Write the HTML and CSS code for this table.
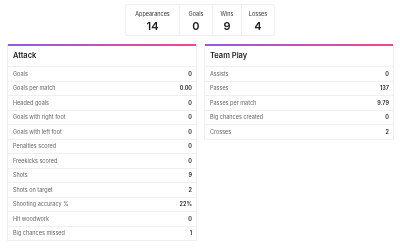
FILE: index.html
```html
<!DOCTYPE html>
<html>
<head>
<meta charset="utf-8">
<link rel="stylesheet" href="styles.css">
</head>
<body>
<div class="page">
  <div class="summary">
    <div class="cell c1"><span class="lbl">Appearances</span><span class="num">14</span></div>
    <div class="cell c2"><span class="lbl">Goals</span><span class="num">0</span></div>
    <div class="cell c3"><span class="lbl">Wins</span><span class="num">9</span></div>
    <div class="cell c4"><span class="lbl">Losses</span><span class="num">4</span></div>
  </div>
  <div class="panels">
    <div class="panel">
      <div class="title">Attack</div>
      <div class="row"><span>Goals</span><b>0</b></div>
      <div class="row"><span>Goals per match</span><b>0.00</b></div>
      <div class="row"><span>Headed goals</span><b>0</b></div>
      <div class="row"><span>Goals with right foot</span><b>0</b></div>
      <div class="row"><span>Goals with left foot</span><b>0</b></div>
      <div class="row"><span>Penalties scored</span><b>0</b></div>
      <div class="row"><span>Freekicks scored</span><b>0</b></div>
      <div class="row"><span>Shots</span><b>9</b></div>
      <div class="row"><span>Shots on target</span><b>2</b></div>
      <div class="row"><span>Shooting accuracy %</span><b>22%</b></div>
      <div class="row"><span>Hit woodwork</span><b>0</b></div>
      <div class="row"><span>Big chances missed</span><b>1</b></div>
    </div>
    <div class="panel">
      <div class="title">Team Play</div>
      <div class="row"><span>Assists</span><b>0</b></div>
      <div class="row"><span>Passes</span><b>137</b></div>
      <div class="row"><span>Passes per match</span><b>9.79</b></div>
      <div class="row"><span>Big chances created</span><b>0</b></div>
      <div class="row"><span>Crosses</span><b>2</b></div>
    </div>
  </div>
</div>
</body>
</html>
```
FILE: styles.css
```css
html, body {
  margin: 0;
  padding: 0;
  background: #ffffff;
}
body {
  font-family: Inter, "Noto Sans", sans-serif;
  color: #222;
  -webkit-font-smoothing: antialiased;
}
.page {
  width: 400px;
  height: 252px;
  padding-top: 4px;
  box-sizing: border-box;
  will-change: transform;
}
.summary {
  display: flex;
  width: 150px;
  height: 32px;
  margin: 0 auto;
  border: 1px solid #efefef;
  box-sizing: border-box;
  border-radius: 2px;
}
.cell {
  display: flex;
  flex-direction: column;
  align-items: center;
  border-left: 1px solid #efefef;
  padding-top: 5px;
  gap: 2px;
  box-sizing: border-box;
}
.cell.c1 { border-left: none; width: 53px; }
.cell.c2 { width: 33px; }
.cell.c3 { width: 29px; }
.cell.c4 { width: 33px; }
.lbl {
  font-size: 5.5px;
  line-height: 8px;
  color: #333;
}
.num {
  font-size: 11px;
  line-height: 13px;
  font-weight: 600;
  color: #222;
}
.panels {
  display: flex;
  gap: 7px;
  padding: 0 6px 0 7px;
  margin-top: 8px;
  align-items: flex-start;
}
.panel {
  width: 190px;
  border: 1px solid #efefef;
  border-top: none;
  box-sizing: border-box;
  position: relative;
  padding-top: 2px;
  background: #fff;
}
.panel::before {
  content: "";
  position: absolute;
  left: 0;
  right: 0;
  top: 0;
  height: 2px;
  background: linear-gradient(to right, #8d5bea, #c94fb5 50%, #ec4b8a);
}
.title {
  height: 20px;
  line-height: 20px;
  padding-left: 5px;
  font-size: 7.5px;
  font-weight: 600;
  color: #222;
}
.row {
  height: 14.5px;
  border-top: 1px solid #efefef;
  box-sizing: border-box;
  display: flex;
  align-items: center;
  justify-content: space-between;
  padding: 0 4px 0 5px;
  font-size: 5.5px;
}
.row span {
  color: #666;
}
.row b {
  color: #222;
  font-weight: 600;
}
```
